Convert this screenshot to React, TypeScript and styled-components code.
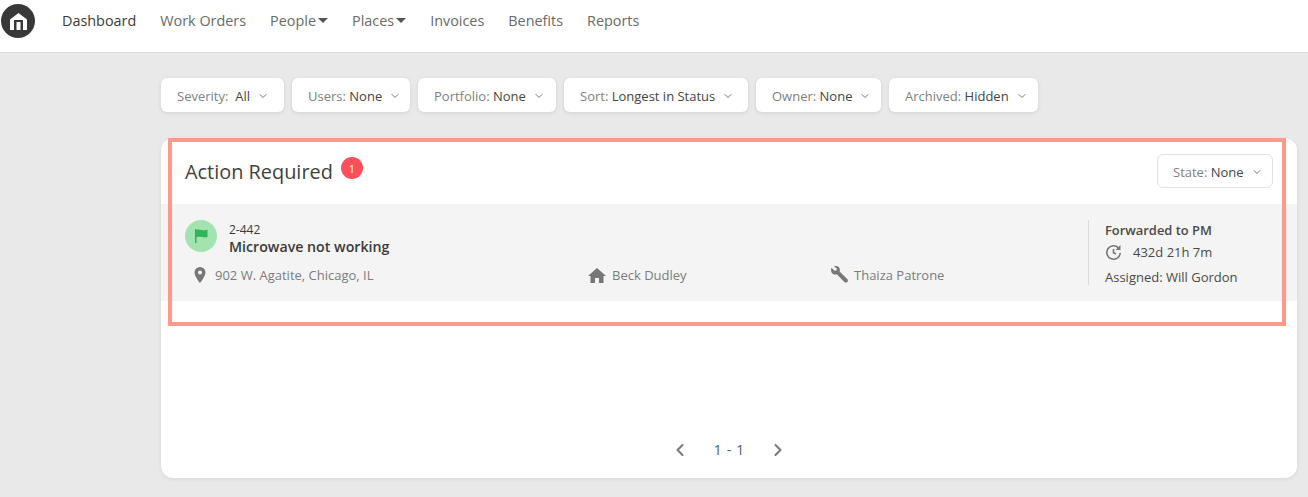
import React from 'react'
import styled, { createGlobalStyle } from 'styled-components'
import { ChevronDown, ChevronLeft, ChevronRight } from 'lucide-react'

const GlobalStyle = createGlobalStyle`
  html, body {
    margin: 0;
    padding: 0;
    background: #e9e9e9;
    font-family: "Open Sans", "Noto Sans", "Liberation Sans", sans-serif;
    color: #3a3a3a;
  }
  * { box-sizing: border-box; }
`

const Page = styled.div`
  position: relative;
  width: 1308px;
  height: 497px;
  overflow: hidden;
`

const Header = styled.header`
  height: 53px;
  display: flex;
  align-items: flex-start;
  background: #fff;
  border-bottom: 1px solid #dcdcdc;
  padding: 4px 0 0 1px;
`

const Logo = styled.div`
  width: 34px;
  height: 34px;
  border-radius: 50%;
  background: #383838;
  display: flex;
  align-items: center;
  justify-content: center;
  margin-right: 27px;
`

const Nav = styled.nav`
  display: flex;
  gap: 24px;
  height: 32px;
  align-items: center;
`

const NavItem = styled.a<{ $active?: boolean }>`
  display: flex;
  align-items: center;
  gap: 2px;
  font-size: 14.4px;
  font-weight: 500;
  color: ${p => (p.$active ? '#3a3a3a' : '#6a6a6a')};
`

const Caret = styled.span`
  width: 0;
  height: 0;
  border-left: 5px solid transparent;
  border-right: 5px solid transparent;
  border-top: 5px solid #555;
`

const Main = styled.main`
  padding: 25px 11px 0 161px;
`

const Filters = styled.div`
  display: flex;
  gap: 8px;
  margin-bottom: 26px;
`

const Filter = styled.button<{ $outlined?: boolean; $w: number }>`
  width: ${p => p.$w}px;
  height: 34px;
  display: flex;
  align-items: center;
  gap: 7px;
  padding: 1px 0 0 ${p => (p.$outlined ? 15 : 16)}px;
  background: #fff;
  border: ${p => (p.$outlined ? '1px solid #e2e2e2' : 'none')};
  border-radius: 6px;
  box-shadow: ${p => (p.$outlined ? 'none' : '0 1px 4px rgba(0, 0, 0, 0.1)')};
  font-family: inherit;
  font-size: 13px;
  color: #808080;
  white-space: nowrap;
`

const FilterValue = styled.span`
  color: #444;
`

const Card = styled.section`
  height: 340px;
  background: #fff;
  border-radius: 12px;
  box-shadow: 0 1px 4px rgba(0, 0, 0, 0.08);
  display: flex;
  flex-direction: column;
`

const CardHead = styled.div`
  height: 66px;
  display: flex;
  align-items: flex-start;
  justify-content: space-between;
  padding: 16px 24px 0;
`

const TitleWrap = styled.div`
  display: flex;
  align-items: flex-start;
  gap: 8px;
`

const Title = styled.h2`
  margin: 2px 0 0;
  font-size: 19.9px;
  line-height: 32px;
  font-weight: 400;
  color: #3f3f3f;
`

const Badge = styled.span`
  width: 22px;
  height: 22px;
  margin-top: 3px;
  border-radius: 50%;
  background: #fd4f59;
  color: #fff;
  font-size: 11.5px;
  display: flex;
  align-items: center;
  justify-content: center;
`

const Row = styled.div`
  height: 97px;
  background: #f4f4f4;
  display: flex;
  padding: 16px 9px 16px 24px;
`

const RowMain = styled.div`
  flex: 1;
  display: flex;
  flex-direction: column;
  gap: 13px;
`

const TopLine = styled.div`
  height: 32px;
  display: flex;
  align-items: flex-start;
  gap: 12px;
`

const FlagCircle = styled.div`
  width: 32px;
  height: 32px;
  border-radius: 50%;
  background: #a2e3b0;
  display: flex;
  align-items: center;
  justify-content: center;
`

const TicketText = styled.div`
  margin-top: 1px;
`

const Ticket = styled.div`
  font-size: 12px;
  line-height: 17px;
  color: #3a3a3a;
`

const Subject = styled.div`
  font-size: 14.2px;
  line-height: 18px;
  font-weight: 600;
  color: #3a3a3a;
`

const Details = styled.div`
  display: grid;
  grid-template-columns: 403px 242px 1fr;
`

const Detail = styled.div<{ $inset?: number; $gap: number }>`
  display: flex;
  align-items: center;
  gap: ${p => p.$gap}px;
  padding-left: ${p => p.$inset ?? 0}px;
  font-size: 13px;
  line-height: 20px;
  color: #7c7c7c;
`

const Status = styled.div`
  width: 200px;
  border-left: 1px solid #dadada;
  padding-left: 16px;
  font-size: 13px;
  color: #4a4a4a;
`

const StatusTitle = styled.div`
  font-weight: 600;
  font-size: 12.9px;
  line-height: 20px;
`

const Timer = styled.div`
  display: flex;
  align-items: center;
  gap: 11px;
  line-height: 24px;
  margin-bottom: 3px;
`

const Assigned = styled.div`
  line-height: 20px;
`

const Pager = styled.div`
  margin-top: auto;
  height: 40px;
  display: flex;
  align-items: flex-start;
  justify-content: center;
  gap: 24px;
  color: #777;
`

const PagerArrow = styled.span`
  height: 24px;
  display: flex;
  align-items: center;
`

const PageText = styled.span`
  font-size: 14.5px;
  line-height: 24px;
  word-spacing: 1px;
  color: #3d6a8c;
`

const Highlight = styled.div`
  position: absolute;
  left: 168px;
  top: 138px;
  width: 1118px;
  height: 188px;
  border: 4px solid #ff9a8b;
  pointer-events: none;
`

const filters = [
  { label: 'Severity:', value: 'All', w: 123, spaced: true },
  { label: 'Users:', value: 'None', w: 118 },
  { label: 'Portfolio:', value: 'None', w: 138 },
  { label: 'Sort:', value: 'Longest in Status', w: 184 },
  { label: 'Owner:', value: 'None', w: 125 },
  { label: 'Archived:', value: 'Hidden', w: 149 },
]

function FilterButton({ label, value, w, outlined, spaced }: { label: string; value: string; w: number; outlined?: boolean; spaced?: boolean }) {
  return (
    <Filter $w={w} $outlined={outlined}>
      <span>
        {label}
        {spaced ? '  ' : ' '}
        {spaced && '\u00a0'}
        <FilterValue>{value}</FilterValue>
      </span>
      <ChevronDown size={12} color="#777" />
    </Filter>
  )
}

export default function App() {
  return (
    <Page>
      <GlobalStyle />
      <Header>
        <Logo>
          <svg width="17" height="17" viewBox="0 0 17 17">
            <path fill="#fff" fillRule="evenodd" d="M8.500 0 17 6.500V17H0V6.500ZM4 17H6.500V9H10.500V17H13V7H4Z" />
          </svg>
        </Logo>
        <Nav>
          <NavItem $active>Dashboard</NavItem>
          <NavItem>Work Orders</NavItem>
          <NavItem>People<Caret /></NavItem>
          <NavItem>Places<Caret /></NavItem>
          <NavItem>Invoices</NavItem>
          <NavItem>Benefits</NavItem>
          <NavItem>Reports</NavItem>
        </Nav>
      </Header>
      <Main>
        <Filters>
          {filters.map(f => (
            <FilterButton key={f.label} {...f} />
          ))}
        </Filters>
        <Card>
          <CardHead>
            <TitleWrap>
              <Title>Action Required</Title>
              <Badge>1</Badge>
            </TitleWrap>
            <FilterButton label="State:" value="None" w={116} outlined />
          </CardHead>
          <Row>
            <RowMain>
              <TopLine>
                <FlagCircle>
                  <svg width="14" height="16" viewBox="0 0 14 16">
                    <path fill="#2fb457" d="M1 1h1.500v14H1zM2.500 2c3-1.500 5.500 1 9 0.200L13.500 1.500V9c-3.500 1.300-6.500-1.200-11 0.200z" />
                  </svg>
                </FlagCircle>
                <TicketText>
                  <Ticket>2-442</Ticket>
                  <Subject>Microwave not working</Subject>
                </TicketText>
              </TopLine>
              <Details>
                <Detail $inset={9} $gap={9}>
                  <svg width="12" height="16" viewBox="0 0 12 16">
                    <path fill="#777" fillRule="evenodd" d="M6 0a5.500 5.500 0 0 1 5.500 5.500C11.500 9.500 6 16 6 16S.5 9.500.5 5.500A5.500 5.500 0 0 1 6 0Zm0 3.500a2 2 0 1 0 0 4 2 2 0 0 0 0-4Z" />
                  </svg>
                  902 W. Agatite, Chicago, IL
                </Detail>
                <Detail $gap={6}>
                  <svg width="18" height="15" viewBox="0 0 18 15">
                    <path fill="#777" d="M9 0 18 8h-2.500v7H11v-5H7v5H2.500V8H0Z" />
                  </svg>
                  Beck Dudley
                </Detail>
                <Detail $gap={6}>
                  <svg width="18" height="18" viewBox="0 0 18 18">
                    <path fill="#777" d="M1.500 1.800 4.600 4.800l1.900-.4.400-1.800L4 .5C6-.4 8.600.2 9.500 2.300c.5 1.100.4 2.200.1 3.100l7.600 7.700c.9.900.9 2.100.1 2.900-.8.800-2.100.8-2.900-.1L6.800 8.300c-1.300.5-3 .4-4.100-.6C1 6.300.6 3.800 1.500 1.800Z" />
                  </svg>
                  Thaiza Patrone
                </Detail>
              </Details>
            </RowMain>
            <Status>
              <StatusTitle>Forwarded to PM</StatusTitle>
              <Timer>
                <svg width="17" height="17" viewBox="0 0 17 17" fill="none" stroke="#777" strokeWidth="1.600">
                  <path d="M13.500 4A6.700 6.700 0 1 0 15.200 9" />
                  <path d="M8.500 5v3.800L11 10" />
                  <path fill="#777" stroke="none" d="M15.500 1v5h-5Z" />
                </svg>
                432d 21h 7m
              </Timer>
              <Assigned>Assigned: Will Gordon</Assigned>
            </Status>
          </Row>
          <Pager>
            <PagerArrow><ChevronLeft size={20} strokeWidth={2.4} /></PagerArrow>
            <PageText>1 - 1</PageText>
            <PagerArrow><ChevronRight size={20} strokeWidth={2.4} /></PagerArrow>
          </Pager>
        </Card>
      </Main>
      <Highlight />
    </Page>
  )
}
